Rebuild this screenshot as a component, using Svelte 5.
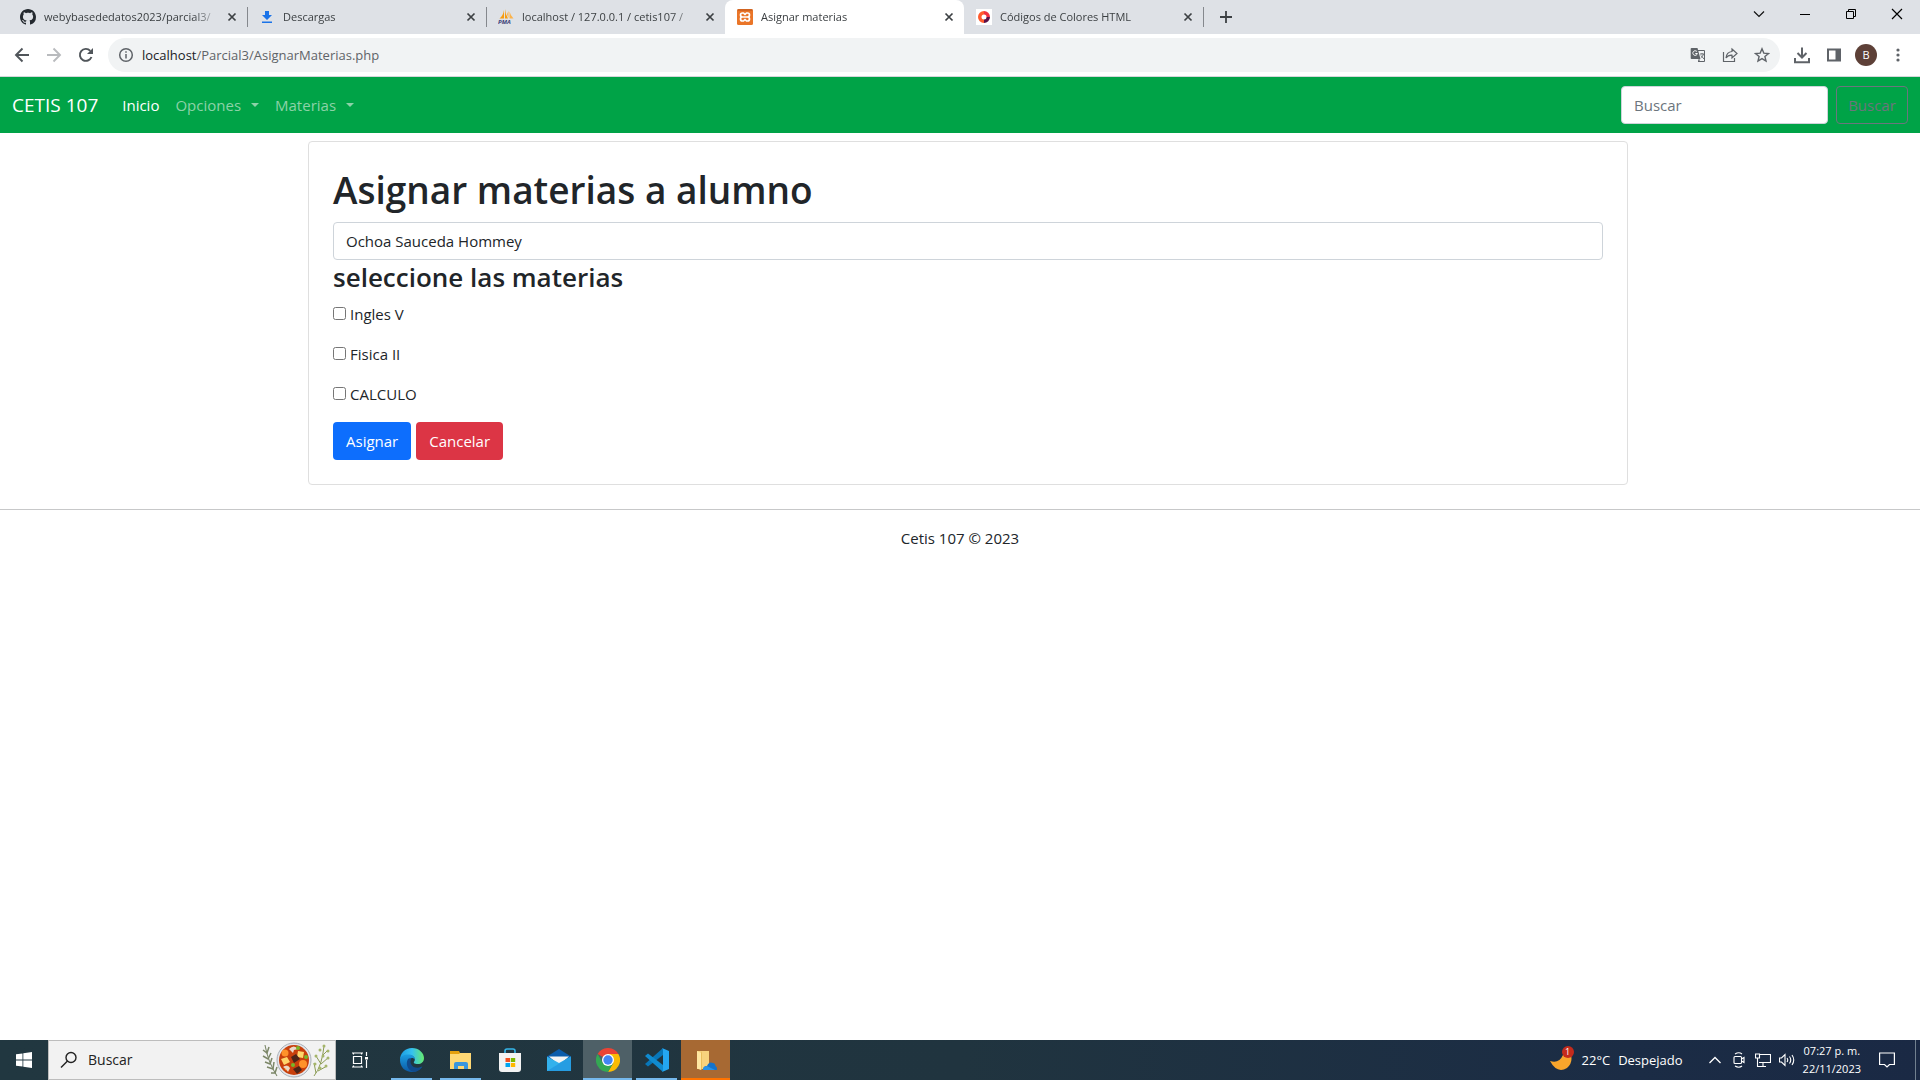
<script>
  const tabs = [
    { id: 'github', title: 'webybasededatos2023/parcial3/' },
    { id: 'download', title: 'Descargas' },
    { id: 'pma', title: 'localhost / 127.0.0.1 / cetis107 /' },
    { id: 'xampp', title: 'Asignar materias', active: true },
    { id: 'colors', title: 'Códigos de Colores HTML' }
  ];
  const subjects = ['Ingles V', 'Fisica II', 'CALCULO'];
</script>

<div class="screen">
  <header class="browser">
    <div class="strip">
      {#each tabs as tab}
        <div class="tab" class:active={tab.active}>
          {#if tab.id === 'github'}
            <svg width="16" height="16" viewBox="0 0 16 16" fill="#24292f"><path d="M8 0C3.58 0 0 3.58 0 8c0 3.54 2.29 6.53 5.47 7.59.4.07.55-.17.55-.38 0-.19-.01-.82-.01-1.49-2.01.37-2.53-.49-2.69-.94-.09-.23-.48-.94-.82-1.13-.28-.15-.68-.52-.01-.53.63-.01 1.08.58 1.23.82.72 1.21 1.87.87 2.33.66.07-.52.28-.87.51-1.07-1.78-.2-3.64-.89-3.64-3.95 0-.87.31-1.59.82-2.15-.08-.2-.36-1.02.08-2.12 0 0 .67-.21 2.2.82.64-.18 1.32-.27 2-.27s1.36.09 2 .27c1.53-1.04 2.2-.82 2.2-.82.44 1.1.16 1.92.08 2.12.51.56.82 1.27.82 2.15 0 3.07-1.87 3.75-3.65 3.95.29.25.54.73.54 1.48 0 1.07-.01 1.93-.01 2.2 0 .21.15.46.55.38A8.01 8.01 0 0 0 16 8c0-4.42-3.58-8-8-8z" /></svg>
          {:else if tab.id === 'download'}
            <svg width="16" height="16" viewBox="0 0 16 16" fill="#1a73e8"><path d="M6 2h4v4h3l-5 5-5-5h3zM3 12.500h10v1.500H3z" /></svg>
          {:else if tab.id === 'pma'}
            <svg width="16" height="16" viewBox="0 0 16 16"><path d="M6 1v8.500H1.500Q5 7 6 1zM7 0q.5 6 3 9.500H7z" fill="#f89c0e" /><path d="M10.500 2v7q-1.500-3-1.500-4zM11.500 2.500q1 4 4 7h-4z" fill="#fbb34c" /><text x="0" y="15" font-size="6" font-weight="700" font-style="italic" fill="#3b4178">PMA</text></svg>
          {:else if tab.id === 'xampp'}
            <svg width="16" height="16" viewBox="0 0 16 16"><rect width="16" height="16" rx="1.500" fill="#ea7528" /><path d="M.5 1h15" stroke="#b9541a" /><path d="M5.500 4h1L8 5.500 9.500 4h1a2 2 0 0 1 0 4a2 2 0 0 1 0 4h-1L8 10.500 6.500 12h-1a2 2 0 0 1 0-4a2 2 0 0 1 0-4zM5.500 8h5" fill="none" stroke="#fff" stroke-width="1.700" stroke-linejoin="round" /></svg>
          {:else}
            <svg width="16" height="16" viewBox="0 0 16 16"><rect width="16" height="16" fill="#fff" /><path d="M8 2a6 6 0 0 0 0 12v-3.500a2.500 2.500 0 0 1 0-5z" fill="#ff5a2d" /><path d="M8 2a6 6 0 0 1 6 6h-3.500A2.500 2.500 0 0 0 8 5.500z" fill="#f0303f" /><path d="M14 8a6 6 0 0 1-6 6v-3.500A2.500 2.500 0 0 0 10.500 8z" fill="#5b1047" /></svg>
          {/if}
          <span class="title">{tab.title}</span>
          <button class="close" aria-label="Cerrar pestaña"><svg width="10" height="10" viewBox="0 0 10 10"><path d="M1.500 1.500l7 7M8.500 1.500l-7 7" stroke="#3c4043" stroke-width="1.700" /></svg></button>
        </div>
      {/each}
      <button class="plus" aria-label="Nueva pestaña"><svg width="12" height="12" viewBox="0 0 12 12"><path d="M6 0v12M0 6h12" stroke="#3c4043" stroke-width="1.800" /></svg></button>
      <div class="window">
        <button aria-label="Buscar pestañas"><svg width="12" height="12" viewBox="0 0 12 12" fill="none" stroke="#111" stroke-width="1.200"><path d="M1 3.500l5 5 5-5" /></svg></button>
        <button aria-label="Minimizar"><svg width="12" height="12" viewBox="0 0 12 12" fill="none" stroke="#000"><path d="M1 6.500h10" /></svg></button>
        <button aria-label="Restaurar"><svg width="12" height="12" viewBox="0 0 12 12" fill="none" stroke="#000"><path d="M1.500 3.500h7v7h-7zM3.500 3.500v-2h7v7h-2" /></svg></button>
        <button aria-label="Cerrar"><svg width="12" height="12" viewBox="0 0 12 12" fill="none" stroke="#000" stroke-width="1.200"><path d="M1 1l10 10M11 1L1 11" /></svg></button>
      </div>
    </div>

    <div class="toolbar">
      <button class="tool" aria-label="Atrás"><svg width="16" height="16" viewBox="0 0 16 16" fill="none" stroke="#50555a" stroke-width="1.900"><path d="M15 8H2M8.500 1.500L2 8l6.500 6.500" /></svg></button>
      <button class="tool" aria-label="Adelante"><svg width="16" height="16" viewBox="0 0 16 16" fill="none" stroke="#b9bbbe" stroke-width="1.900"><path d="M1 8h13M7.500 1.500L14 8l-6.500 6.500" /></svg></button>
      <button class="tool" aria-label="Recargar"><svg width="16" height="16" viewBox="0 0 16 16"><path d="M13.500 10A6 6 0 1 1 12.300 3.800" fill="none" stroke="#50555a" stroke-width="1.900" /><path d="M15 1v6H9z" fill="#50555a" /></svg></button>
      <div class="omnibox">
        <svg width="16" height="16" viewBox="0 0 16 16" fill="none" stroke="#5f6368" stroke-width="1.500"><circle cx="8" cy="8" r="6.300" /><path d="M8 7v4.500M8 4.200v1.600" /></svg>
        <span class="url"><b>localhost</b>/Parcial3/AsignarMaterias.php</span>
        <button class="tool" aria-label="Traducir"><svg width="16" height="16" viewBox="0 0 16 16"><path d="M7 3.500h7.500v11H8" fill="none" stroke="#5f6368" /><path d="M1.500 1h6l3 11H1.500a.8.800 0 0 1-.8-.8V1.800a.8.800 0 0 1 .8-.8zM8 12.500h2.300L8.500 15z" fill="#5f6368" /><path d="M7 4.700A2.300 2.300 0 1 0 7.400 6.500H5.300" fill="none" stroke="#fff" /><path d="M10 7h4M12 6v1M13.500 7q-.5 2.500-2.500 3.500M11 8.500l3 3.500" fill="none" stroke="#5f6368" stroke-width=".9" /></svg></button>
        <button class="tool" aria-label="Compartir"><svg width="16" height="16" viewBox="0 0 16 16" fill="none" stroke="#5f6368" stroke-width="1.200"><path d="M1.500 5v9.500h11V11" /><path d="M10 2l5 4.500-5 4.500V8.200Q6 8 4 11q.5-6 6-6.500z" /></svg></button>
        <button class="tool" aria-label="Favorito"><svg width="16" height="16" viewBox="0 0 16 16" fill="none" stroke="#5f6368" stroke-width="1.400"><path d="M8 1.800l1.800 4.300 4.700.4-3.600 3 1.100 4.600-4-2.500-4 2.500 1.100-4.600-3.600-3 4.700-.4z" /></svg></button>
      </div>
      <div class="extras">
        <button class="tool" aria-label="Descargas"><svg width="18" height="18" viewBox="0 0 18 18" fill="none" stroke="#5f6368" stroke-width="2"><path d="M9 1.500v9M4.500 7L9 11.500 13.500 7M2 12v4.200h14V12" /></svg></button>
        <button class="tool" aria-label="Panel lateral"><svg width="16" height="16" viewBox="0 0 16 16"><path d="M2 2.500h12v11H2z" fill="none" stroke="#5f6368" stroke-width="2" /><path d="M9.500 2h5v12h-5z" fill="#5f6368" /></svg></button>
        <button class="tool avatar" aria-label="Perfil B">B</button>
        <button class="tool" aria-label="Menú"><svg width="16" height="16" viewBox="0 0 16 16" fill="#5f6368"><circle cx="8" cy="3" r="1.600" /><circle cx="8" cy="8" r="1.600" /><circle cx="8" cy="13" r="1.600" /></svg></button>
      </div>
    </div>
  </header>

  <div class="page">
    <nav class="navbar">
      <a class="brand" href="#inicio">CETIS 107</a>
      <a class="link current" href="#inicio">Inicio</a>
      <a class="link caret" href="#opciones">Opciones</a>
      <a class="link caret" href="#materias">Materias</a>
      <form class="search">
        <input type="search" placeholder="Buscar" aria-label="Buscar" />
        <button type="button">Buscar</button>
      </form>
    </nav>

    <main class="container">
      <form class="card">
        <h1>Asignar materias a alumno</h1>
        <select aria-label="Alumno"><option>Ochoa Sauceda Hommey</option></select>
        <h3>seleccione las materias</h3>
        <div class="subjects">
          {#each subjects as subject}
            <label><input type="checkbox" />{subject}</label>
          {/each}
        </div>
        <div class="actions">
          <button class="btn primary" type="button">Asignar</button>
          <button class="btn danger" type="button">Cancelar</button>
        </div>
      </form>
    </main>
    <hr />
    <footer>Cetis 107 © 2023</footer>
  </div>

  <div class="taskbar">
    <button class="tile" aria-label="Inicio"><svg width="16" height="16" viewBox="0 0 16 16" fill="#fff"><path d="M0 2.300L6.500 1.400v6.100H0zM7.300 1.300L16 0v7.500H7.300zM0 8.400h6.500v6.200L0 13.700zM7.300 8.400H16V16l-8.700-1.300z" /></svg></button>
    <label class="finder">
      <svg width="18" height="18" viewBox="0 0 18 18" fill="none" stroke="#222" stroke-width="1.400"><circle cx="11" cy="6.500" r="5" /><path d="M7.500 10L1 16.500" /></svg>
      <input type="text" placeholder="Buscar" aria-label="Buscar en Windows" />
      <svg width="68" height="36" viewBox="0 0 68 36">
        <g fill="none" stroke="#7c8768" stroke-width="1.100"><path d="M3 3q3 17 12 31" /><path d="M1 8l4 3 2-6M1 14l5 3 3-6M3 20l5 2 2-6M5 25l6 2 1-7M9 31l4 0 2-6" stroke-width="1.500" /></g>
        <g fill="none" stroke="#8b9b55"><path d="M52 34q8-10 10-30M56 29l9-5M54 31l-2-10M59 22l8-7M59 22l-5-8M61 13l5-5" /></g>
        <g fill="#a5b56a"><circle cx="62" cy="4" r="1.500" /><circle cx="58" cy="8" r="1.500" /><circle cx="66" cy="9" r="1.500" /><circle cx="54" cy="14" r="1.500" /><circle cx="66" cy="16" r="1.500" /><circle cx="61" cy="14" r="1.500" /><circle cx="53" cy="22" r="1.500" /><circle cx="64" cy="24" r="1.500" /><circle cx="58" cy="26" r="1.500" /></g>
        <circle cx="32" cy="18" r="17" fill="#e4e6ea" stroke="#a9afb8" /><circle cx="32" cy="18" r="15" fill="#c83f0c" />
        <g fill="#ff922a"><circle cx="23" cy="11" r="3.500" /><circle cx="41" cy="22" r="4" /><circle cx="25" cy="26" r="2.500" /></g>
        <g fill="#ffd56b"><path d="M36 9l6 1-1 6-6-1zM19 17l6-2 3 5-6 3z" /></g>
        <g fill="#4e2418"><path d="M29 15l5-3 4 5-6 4zM31 27l6-3 3 4-5 4z" /></g>
        <g fill="#ead9c8"><path d="M27 7q5-5 9 0l-4 1-1 3-2-2zM21 25q4-3 7 1l-2 4-2-3z" /></g>
        <g fill="#76b82a"><circle cx="36" cy="6" r="2" /><circle cx="44" cy="15" r="2" /><circle cx="31" cy="23" r="2" /></g>
      </svg>
    </label>
    <button class="tile views" aria-label="Vista de tareas"><svg width="16" height="16" viewBox="0 0 16 16" fill="none" stroke="#fff" stroke-width="1.200"><path d="M0 1h11M0 15h11M1.500 4.500h8v7h-8zM1.500 1v1.500M9.500 1v1.500M1.500 15v-1.500M9.500 15v-1.500M14.500 0v4M14.500 8v8" /><path d="M13 5h3v2.500h-3z" fill="#fff" stroke="none" /></svg></button>

    <button class="tile app open" aria-label="Edge">
      <svg width="24" height="24" viewBox="0 0 24 24"><defs><linearGradient id="edgeTop" x1="0" x2="1"><stop offset="0" stop-color="#1b9de2" /><stop offset=".5" stop-color="#35c1f1" /><stop offset="1" stop-color="#66eb6e" /></linearGradient><linearGradient id="edgeLow" x1="0" y1="0" x2="0" y2="1"><stop offset="0" stop-color="#1b9de2" /><stop offset="1" stop-color="#0c59a4" /></linearGradient></defs><path d="M0 12C0 5 5 0 12 0c7 0 12 5 12 10 0 4-3 6-6 6-4 0-5-1-3.500-3C16 10 13 7 9 7 4 7 1 9 0 12z" fill="url(#edgeTop)" /><path d="M0 12C.5 8 4 6.500 8 6.500c4 0 7 2 7 5-1-1-3-2-4-1-5 4-2 9 3 10 3 .5 6-.5 8-2-2 3.500-6 5.500-10 5.500C5 24 0 19 0 12z" fill="url(#edgeLow)" /><path d="M8 11c-3 5 0 12 6 13 4-.5 7-3 8.500-5.500C18 21 13 20 11 16c-1-2-.5-4 .5-5.500-1-.5-2.500-.5-3.500.5z" fill="#114a8b" /></svg>
    </button>
    <button class="tile app open" aria-label="Explorador de archivos">
      <svg width="24" height="24" viewBox="0 0 24 24"><path d="M1 3h9l1 2h11v4H1z" fill="#e5a00d" /><path d="M1 6h9l1-1h11v16H1z" fill="#ffd874" /><path d="M5 21v-5q0-2 2-2h10q2 0 2 2v5h-4v-3H9v3z" fill="#3a96dd" /></svg>
    </button>
    <button class="tile app" aria-label="Microsoft Store">
      <svg width="24" height="24" viewBox="0 0 24 24"><path d="M7 6V3q0-2 2-2h6q2 0 2 2v3" fill="none" stroke="#35b6ea" stroke-width="1.600" /><path d="M1 5h22v16q0 3-3 3H4q-3 0-3-3z" fill="#f3f3f3" /><path d="M7.500 10H12v4H7.500z" fill="#f25022" /><path d="M12.800 10h4.400v4h-4.400z" fill="#7fba00" /><path d="M7.500 15H12v4H7.500z" fill="#00a4ef" /><path d="M12.800 15h4.400v4h-4.400z" fill="#ffb900" /></svg>
    </button>
    <button class="tile app" aria-label="Correo">
      <svg width="24" height="24" viewBox="0 0 24 24"><path d="M0 8.500L12 1l12 7.500v3H0z" fill="#0b5cab" /><path d="M2 8.500h20L12 17z" fill="#f4f4f4" /><path d="M0 8.500L12 15l12-6.500V23H0z" fill="#33b1ec" /><path d="M24 8.500V23H0z" fill="#1b8cdb" opacity=".55" /></svg>
    </button>
    <button class="tile app open current" aria-label="Chrome">
      <svg width="24" height="24" viewBox="0 0 24 24"><path d="M12 12L1.600 6A12 12 0 0 1 22.400 6z" fill="#ea4335" /><path d="M12 6h10.400A12 12 0 0 1 12 24l5.200-9z" fill="#fbbc04" /><path d="M1.600 6A12 12 0 0 0 12 24l5.200-9L6.800 15z" fill="#34a853" /><circle cx="12" cy="12" r="6" fill="#fff" /><circle cx="12" cy="12" r="4.700" fill="#4285f4" /></svg>
    </button>
    <button class="tile app open" aria-label="Visual Studio Code">
      <svg width="24" height="24" viewBox="0 0 24 24"><path d="M18 0v7L3 18.500 0 16z" fill="#0877b9" /><path d="M18 24v-7L3 5.500 0 8z" fill="#108bd0" /><path d="M17 0l7 3v18l-7 3q1-.5 1-2V2q0-1.500-1-2z" fill="#24a7f2" /></svg>
    </button>
    <button class="tile app alert" aria-label="OneDrive">
      <svg width="24" height="24" viewBox="0 0 24 24"><path d="M3 3h12v18H3z" fill="#f7d27d" /><path d="M3 3l4 2v17l-4-1.500z" fill="#ffe6a1" /><path d="M7 5l1-2v18l-1 1z" fill="#e8bd5b" /><path d="M9 22q0-4 4-4 2-5 6-3 2 0 2.500 3 2 1 1.500 4z" fill="#1673ca" /><path d="M9 22q0-4 4-4l8 4z" fill="#2791e6" /></svg>
    </button>

    <div class="tray">
      <button class="weather">
        <span class="moon">
          <svg width="24" height="24" viewBox="0 0 24 24"><path d="M0 13q9 3 13-6 3-3 8 0 2 8-4 13-10 6-17-7z" fill="#f8a52c" /></svg>
          <span class="badge">1</span>
        </span>
        <span>22°C</span><span>Despejado</span>
      </button>
      <button aria-label="Mostrar iconos ocultos"><svg width="16" height="16" viewBox="0 0 16 16" fill="none" stroke="#fff" stroke-width="1.300"><path d="M2.500 11L8 5.500l5.500 5.500" /></svg></button>
      <button aria-label="Reunirse ahora"><svg width="16" height="16" viewBox="0 0 16 16" fill="none" stroke="#fff" stroke-width="1.100"><rect x="3" y="4.500" width="7.500" height="7" rx="1" /><path d="M10.500 7l2.500-1.500v5L10.500 9M4 2q4-2.500 7 0M4 14q4 2.500 7 0" /></svg></button>
      <button aria-label="Red"><svg width="16" height="16" viewBox="0 0 16 16" fill="none" stroke="#fff" stroke-width="1.100"><path d="M5 2.500h10.500v8H4M8 10.500v4M5 14.500h6M.5 2h4v4h-4zM2.500 6v8.500H5" /></svg></button>
      <button aria-label="Volumen"><svg width="16" height="16" viewBox="0 0 16 16" fill="none" stroke="#fff" stroke-width="1.100"><path d="M.5 6h2L6 2.500v11L2.500 10h-2zM8 6q1.500 2 0 4M10.500 4.500q2.500 3.500 0 7M13 3q3.500 5 0 10" /></svg></button>
      <button class="clock"><span>07:27 p. m.</span><span>22/11/2023</span></button>
      <button class="notes" aria-label="Notificaciones"><svg width="16" height="16" viewBox="0 0 16 16" fill="none" stroke="#fff" stroke-width="1.200"><path d="M.6 1h14.800v11.500H10.500L8 15l-2.500-2.500H.6z" /></svg></button>
    </div>
  </div>
</div>

<style>
  :global(body) { margin: 0; background: #fff; }
  .screen { display: flex; flex-direction: column; min-height: 100vh; font-family: "Open Sans", "Noto Sans", sans-serif; font-size: 15px; line-height: 24px; color: #212529; }
  .screen * { box-sizing: border-box; }
  button { font: inherit; color: inherit; border: 0; background: none; padding: 0; display: flex; align-items: center; justify-content: center; }
  svg { flex: none; display: block; }

  .strip { display: flex; height: 34px; padding-left: 8px; background: #dee1e6; }
  .tab { position: relative; display: flex; align-items: center; width: 239px; padding: 0 8px 0 12px; font-size: 11px; line-height: 16px; color: #3c4043; }
  .tab::after { content: ""; position: absolute; right: -1px; top: 7px; width: 1px; height: 20px; background: #85888d; }
  .tab.active { background: #fff; border-radius: 8px 8px 0 0; }
  .tab.active::after, .tab:has(+ .active)::after { display: none; }
  .title { flex: 1; margin-left: 8px; overflow: hidden; white-space: nowrap; mask-image: linear-gradient(to right, #000 150px, transparent 175px); }
  .close { width: 14px; height: 14px; }
  .plus { width: 28px; height: 34px; margin-left: 9px; }
  .window { display: flex; margin-left: auto; }
  .window button { width: 46px; height: 28px; }

  .toolbar { display: flex; align-items: center; gap: 16px; padding: 4px 14px; height: 43px; background: #fff; border-bottom: 1px solid #d5d7da; }
  .tool { width: 16px; height: 16px; }
  .omnibox { flex: 1; display: flex; align-items: center; gap: 16px; height: 34px; margin: 0 -2px; padding: 0 10px; border-radius: 17px; background: #f1f3f4; }
  .url { flex: 1; margin-left: -8px; font-size: 13px; color: #5f6368; }
  .url b { font-weight: 400; color: #202124; }
  .extras { display: flex; gap: 16px; align-items: center; }
  .avatar { width: 22px; height: 22px; margin: 0 -3px; border-radius: 50%; background: #5d4037; color: #fff; font-size: 11px; }

  .page { flex: 1; }
  .navbar { display: flex; align-items: center; padding: 8px 12px; height: 56px; background: #00a347; }
  .navbar a { text-decoration: none; }
  .brand { font-size: 19px; line-height: 30px; color: #fff; margin-right: 16px; }
  .link { padding: 8px; color: #8cd2a8; }
  .link.current { color: #fff; }
  .caret::after { content: ""; display: inline-block; margin-left: 10px; vertical-align: 4px; border: 4px solid transparent; border-top-color: currentColor; border-bottom: 0; }
  .search { display: flex; gap: 8px; margin-left: auto; }
  .search input { width: 207px; height: 38px; padding: 6px 12px; font: inherit; border: 1px solid #ced4da; border-radius: 4px; background: #fff; }
  .search input::placeholder { color: #6c757d; opacity: 1; }
  .search button { width: 72px; height: 38px; border: 1px solid #6c757d; border-radius: 4px; color: #6c757d; }

  .container { max-width: 1336px; margin: 8px auto 0; padding-left: 16px; }
  .card { padding: 24px; border: 1px solid #dfdfdf; border-radius: 4px; }
  h1, h3 { margin: 0 0 8px; font-weight: 600; }
  h1 { font-size: 37px; line-height: 48px; }
  h3 { font-size: 26px; line-height: 34px; }
  select { appearance: none; display: block; width: 100%; height: 38px; padding: 6px 12px; font: inherit; color: #212529; background: #fff; border: 1px solid #ced4da; border-radius: 4px; }
  .subjects { display: flex; flex-direction: column; gap: 16px; }
  label { display: flex; align-items: center; }
  .subjects input { width: 13px; height: 13px; margin: 0 4px 2px 0; }
  .actions { display: flex; gap: 5px; margin-top: 16px; }
  .btn { height: 38px; padding: 6px 13px; border-radius: 4px; color: #fff; }
  .primary { background: #0d6efd; }
  .danger { background: #dc3545; }
  hr { margin: 24px 0 16px; border: 0; border-top: 1px solid #c7c8c9; }
  footer { text-align: center; }

  .taskbar { display: flex; height: 40px; background: linear-gradient(to right, #213740, #20343f 50%, #1b2c45 85%, #1a2944); }
  .tile { width: 48px; height: 40px; }
  .views { margin-right: 3px; }
  .app { position: relative; width: 49px; }
  .open::after, .alert::after { content: ""; position: absolute; left: 4px; right: 4px; bottom: 0; height: 2px; background: #76b9ed; }
  .current.tile { background: #4e6067; }
  .current::after, .alert::after { left: 0; right: 0; }
  .alert { background: #a76933; }
  .alert::after { background: #ff7300; }
  .finder { width: 288px; padding: 0 5px 0 11px; background: #f2f2f2; border: 1px solid #bdbdbd; }
  .finder input { flex: 1; min-width: 0; margin-left: 10px; padding: 0; border: 0; background: none; font: inherit; font-size: 14px; }
  .finder input::placeholder { color: #222; opacity: 1; }
  .tray { display: flex; align-items: center; gap: 8px; margin-left: auto; padding-right: 4px; color: #fff; }
  .weather { gap: 8px; margin-right: 16px; font-size: 13px; }
  .moon { position: relative; }
  .badge { position: absolute; right: 0; top: -2px; width: 12px; height: 12px; border-radius: 50%; background: #c42b1c; font-size: 9px; line-height: 12px; text-align: center; }
  .clock { flex-direction: column; font-size: 11px; line-height: 18px; }
  .notes { height: 40px; padding: 0 20px 0 10px; border-right: 1px solid #71808f; }
</style>
